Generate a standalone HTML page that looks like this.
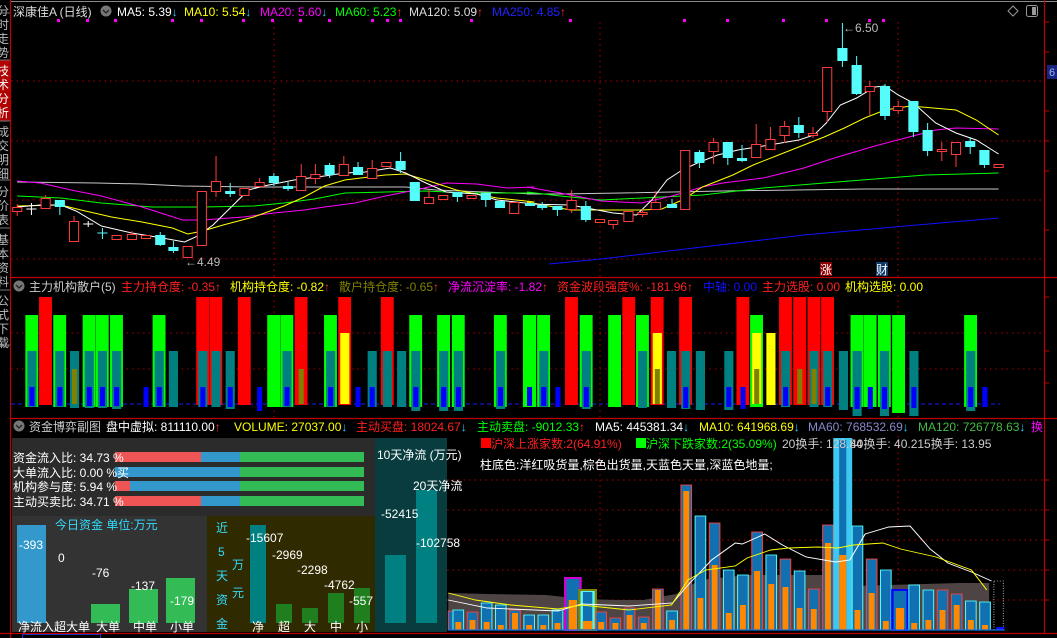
<!DOCTYPE html>
<html><head><meta charset="utf-8"><style>
html,body{margin:0;padding:0;background:#000;width:1057px;height:638px;overflow:hidden}
svg{display:block;font-family:"Liberation Sans","Noto Sans CJK SC",sans-serif}
.r{fill:#000;stroke:#ff3c3c;stroke-width:1}
.c{fill:#54fcfc}
.w{stroke:#ff3c3c;stroke-width:1}
.wc{stroke:#54fcfc;stroke-width:1}
.gd{stroke:#b00000;stroke-dasharray:1.5 4;stroke-width:1}
.G{fill:#00ff00}.R{fill:#ff0000}.T{fill:#008080}.B{fill:#0000ff}.Y{fill:#ffff00}.O{fill:#808000}
</style></head><body>
<svg width="1057" height="638" viewBox="0 0 1057 638" xmlns="http://www.w3.org/2000/svg">
<rect width="1057" height="638" fill="#000"/>
<!-- left tabs -->
<rect x="0" y="0" width="10" height="638" fill="#000"/>
<rect x="0" y="60" width="10" height="61" fill="#b00000"/>
<g fill="#bbbbbb" font-size="12">
<text x="-3" y="15">分</text><text x="-3" y="29">时</text><text x="-3" y="43">走</text><text x="-3" y="57">势</text>
<text x="-3" y="75" fill="#fff">技</text><text x="-3" y="89" fill="#fff">术</text><text x="-3" y="103" fill="#fff">分</text><text x="-3" y="117" fill="#fff">析</text>
<text x="-3" y="136">成</text><text x="-3" y="150">交</text><text x="-3" y="164">明</text><text x="-3" y="178">细</text>
<text x="-3" y="196">分</text><text x="-3" y="210">价</text><text x="-3" y="224">表</text>
<text x="-3" y="244">基</text><text x="-3" y="258">本</text><text x="-3" y="272">资</text><text x="-3" y="286">料</text>
<text x="-3" y="305">公</text><text x="-3" y="319">式</text><text x="-3" y="333">下</text><text x="-3" y="347">载</text>
</g>
<g stroke="#777" stroke-width="1"><line x1="0" y1="60" x2="10" y2="60"/><line x1="0" y1="121" x2="10" y2="121"/><line x1="0" y1="180" x2="10" y2="180"/><line x1="0" y1="228" x2="10" y2="228"/><line x1="0" y1="290" x2="10" y2="290"/><line x1="0" y1="13" x2="10" y2="13"/><line x1="0" y1="345" x2="10" y2="345"/></g>
<!-- frame -->
<line x1="10" y1="1.5" x2="1057" y2="1.5" stroke="#888" stroke-width="1"/>
<g stroke="#c00000" stroke-width="1.2">
<line x1="10.5" y1="0" x2="10.5" y2="638"/>
<line x1="1044.5" y1="0" x2="1044.5" y2="633"/>
<line x1="10" y1="277.5" x2="1057" y2="277.5"/>
<line x1="10" y1="418.5" x2="1057" y2="418.5"/>
<line x1="0" y1="633.5" x2="1057" y2="633.5"/>
</g>
<g stroke="#c00000" stroke-width="1"><line x1="1044" y1="22" x2="1049" y2="22"/><line x1="1044" y1="52" x2="1049" y2="52"/><line x1="1044" y1="111" x2="1049" y2="111"/><line x1="1044" y1="141" x2="1049" y2="141"/><line x1="1044" y1="171" x2="1049" y2="171"/><line x1="1044" y1="230" x2="1049" y2="230"/><line x1="1044" y1="297" x2="1049" y2="297"/><line x1="1044" y1="351" x2="1049" y2="351"/><line x1="1044" y1="383" x2="1049" y2="383"/><line x1="1044" y1="480" x2="1049" y2="480"/><line x1="1044" y1="510" x2="1049" y2="510"/><line x1="1044" y1="540" x2="1049" y2="540"/><line x1="1044" y1="570" x2="1049" y2="570"/><line x1="1044" y1="600" x2="1049" y2="600"/></g>
<rect x="1047" y="65" width="10" height="14" fill="#1a237e"/><text x="1049" y="76" font-size="11" fill="#9fb4ff">6</text>
<rect x="22.5" y="634.5" width="78" height="5" fill="#000" stroke="#2030c0"/>

<!-- grid main -->
<g class="gd">
<line x1="11" y1="81" x2="1044" y2="81"/><line x1="11" y1="141" x2="1044" y2="141"/><line x1="11" y1="200" x2="1044" y2="200"/><line x1="11" y1="259" x2="1044" y2="259"/>
<line x1="274" y1="22" x2="274" y2="277"/><line x1="600" y1="22" x2="600" y2="277"/><line x1="898" y1="22" x2="898" y2="277"/>
<line x1="11" y1="333" x2="1044" y2="333"/><line x1="11" y1="369" x2="1044" y2="369"/>
<line x1="274" y1="295" x2="274" y2="418"/><line x1="600" y1="295" x2="600" y2="418"/><line x1="898" y1="295" x2="898" y2="418"/>
<line x1="447" y1="480" x2="1044" y2="480"/><line x1="447" y1="510" x2="1044" y2="510"/><line x1="447" y1="540" x2="1044" y2="540"/><line x1="447" y1="570" x2="1044" y2="570"/><line x1="447" y1="600" x2="1044" y2="600"/>
<line x1="600" y1="436" x2="600" y2="632"/><line x1="898" y1="436" x2="898" y2="632"/>
</g>

<!-- title main -->
<g font-size="12">
<text x="13" y="16" fill="#ddd">深康佳A (日线)</text>
<circle cx="106" cy="11" r="5.5" fill="#777"/><path d="M103 10l3 3 3-3" stroke="#222" stroke-width="1.3" fill="none"/>
<text x="117" y="16" fill="#fff">MA5: 5.39<tspan fill="#3cf">↓</tspan></text>
<text x="184" y="16" fill="#ff0">MA10: 5.54<tspan fill="#3cf">↓</tspan></text>
<text x="260" y="16" fill="#f0f">MA20: 5.60<tspan fill="#3cf">↓</tspan></text>
<text x="335" y="16" fill="#0f0">MA60: 5.23<tspan fill="#f33">↑</tspan></text>
<text x="409" y="16" fill="#ddd">MA120: 5.09<tspan fill="#f33">↑</tspan></text>
<text x="492" y="16" fill="#22f">MA250: 4.85<tspan fill="#f33">↑</tspan></text>
</g>
<path d="M1013 6l5 5-5 5-5-5z" fill="none" stroke="#999"/>
<rect x="1026.5" y="5.5" width="11" height="11" rx="2" fill="none" stroke="#999"/><rect x="1032" y="7" width="4" height="8" fill="#999"/>
<g fill="#f0f"><rect x="57" y="19" width="3" height="3"/><rect x="86" y="19" width="3" height="3"/><rect x="114" y="19" width="3" height="3"/><rect x="171" y="19" width="3" height="3"/><rect x="200" y="19" width="3" height="3"/><rect x="242" y="19" width="3" height="3"/><rect x="271" y="19" width="3" height="3"/><rect x="299" y="19" width="3" height="3"/><rect x="328" y="19" width="3" height="3"/><rect x="371" y="19" width="3" height="3"/><rect x="386" y="19" width="3" height="3"/><rect x="399" y="19" width="3" height="3"/><rect x="470" y="19" width="3" height="3"/><rect x="569" y="19" width="3" height="3"/><rect x="683" y="19" width="3" height="3"/><rect x="726" y="19" width="3" height="3"/><rect x="782" y="19" width="3" height="3"/><rect x="825" y="19" width="3" height="3"/><rect x="868" y="19" width="3" height="3"/><rect x="882" y="19" width="3" height="3"/></g>

<!-- main candles left -->
<g transform="scale(1.0142,1)">
<polyline fill="none" stroke="#c8c8c8" points="17,182 95,183 140,184 180,186 250,187 400,187 430,190 527,194"/>
<polyline fill="none" stroke="#00ff00" points="17,196 60,198 100,203 150,207 200,207 250,206 280,203 310,199 340,193 380,192 420,191 460,193 527,193"/>
<polyline fill="none" stroke="#ff00ff" points="17,181 40,183 70,190 100,196 140,207 180,220 200,220 240,217 270,213 300,210 320,207 350,203 380,196 410,190 440,183 470,184 500,188 527,187"/>
<polyline fill="none" stroke="#ffff00" points="17,206 60,205 80,210 110,217 140,222 170,228 185,234 200,231 220,225 250,217 280,206 300,197 320,186 340,180 380,175 400,174 420,180 450,190 490,198 527,202"/>
<polyline fill="none" stroke="#fff" points="17,207 40,205 60,205 75,211 100,226 130,233 160,238 182,242 195,236 210,225 225,210 245,190 260,186 290,180 320,176 340,173 360,172 385,168 400,173 420,183 440,192 470,194 490,200 527,204"/>
<g class="w">
<line x1="17" y1="204" x2="17" y2="216"/><line x1="45" y1="195" x2="45" y2="208"/><line x1="73" y1="216" x2="73" y2="221"/><line x1="130" y1="231" x2="130" y2="234"/><line x1="213" y1="156" x2="213" y2="197"/><line x1="256" y1="178" x2="256" y2="182"/><line x1="297" y1="164" x2="297" y2="176"/><line x1="311" y1="164" x2="311" y2="184"/><line x1="339" y1="156" x2="339" y2="164"/><line x1="367" y1="160" x2="367" y2="168"/><line x1="423" y1="190" x2="423" y2="197"/>
</g>
<g class="wc">
<line x1="59" y1="200" x2="59" y2="215"/><line x1="101" y1="228" x2="101" y2="239"/><line x1="96" y1="233" x2="106" y2="233"/><line x1="158" y1="232" x2="158" y2="246"/><line x1="171" y1="241" x2="171" y2="253"/><line x1="227" y1="183" x2="227" y2="197"/><line x1="270" y1="173" x2="270" y2="186"/><line x1="284" y1="182" x2="284" y2="191"/><line x1="325" y1="163" x2="325" y2="178"/><line x1="353" y1="162" x2="353" y2="167"/><line x1="395" y1="152" x2="395" y2="173"/><line x1="451" y1="192" x2="451" y2="202"/><line x1="479" y1="193" x2="479" y2="207"/>
</g>
<g stroke="#fff"><line x1="26" y1="209" x2="36" y2="209"/><line x1="31" y1="203" x2="31" y2="215"/><line x1="82" y1="224" x2="92" y2="224"/><line x1="87" y1="221" x2="87" y2="227"/></g>
<rect class="r" x="12.5" y="207.5" width="9" height="4"/>
<rect class="r" x="40.5" y="198.5" width="9" height="10"/>
<rect class="c" x="54" y="200" width="10" height="7"/>
<rect class="r" x="68.5" y="221.5" width="9" height="20"/>
<rect class="r" x="110.5" y="235.5" width="9" height="4"/>
<rect class="r" x="125.5" y="234.5" width="9" height="5"/>
<rect class="r" x="139.5" y="235.5" width="9" height="3"/>
<rect class="c" x="153" y="235" width="10" height="10"/>
<rect class="c" x="166" y="247" width="10" height="4"/>
<rect class="r" x="180.5" y="246.5" width="9" height="11"/>
<rect class="r" x="194.5" y="191.5" width="9" height="54"/>
<rect class="r" x="208.5" y="181.5" width="9" height="10"/>
<rect class="c" x="222" y="191" width="10" height="3"/>
<rect class="r" x="236.5" y="188.5" width="9" height="7"/>
<rect class="r" x="251.5" y="182.5" width="9" height="4"/>
<rect class="c" x="265" y="176" width="10" height="7"/>
<rect class="c" x="279" y="186" width="10" height="3"/>
<rect class="r" x="292.5" y="176.5" width="9" height="14"/>
<rect class="r" x="306.5" y="174.5" width="9" height="4"/>
<rect class="c" x="320" y="165" width="10" height="10"/>
<rect class="r" x="334.5" y="164.5" width="9" height="11"/>
<rect class="c" x="348" y="167" width="10" height="8"/>
<rect class="r" x="362.5" y="168.5" width="9" height="10"/>
<rect class="r" x="376.5" y="162.5" width="9" height="4"/>
<rect class="c" x="390" y="161" width="10" height="9"/>
<rect class="c" x="404" y="182" width="10" height="19"/>
<rect class="r" x="418.5" y="197.5" width="9" height="6"/>
<rect class="r" x="432.5" y="195.5" width="9" height="4"/>
<rect class="c" x="446" y="192" width="10" height="5"/>
<rect class="r" x="460.5" y="195.5" width="9" height="3"/>
<rect class="c" x="474" y="193" width="10" height="7"/>
<rect class="c" x="488" y="201" width="10" height="7"/>
<rect class="r" x="502.5" y="202.5" width="9" height="11"/>
</g>
<text x="185" y="266" font-size="12" fill="#bbb">←4.49</text>

<!-- main right -->
<g transform="translate(527,0) scale(1.0142,1) translate(-527,0)">
<polyline fill="none" stroke="#1010ff" points="549,264 600,259 700,247 800,235 900,226 992,218"/>
<polyline fill="none" stroke="#c8c8c8" points="527,194 560,194 620,193 720,191 860,189 890,189 992,189"/>
<polyline fill="none" stroke="#00ff00" points="527,192 560,196 600,200 700,195 760,188 820,183 870,179 920,175 992,173"/>
<polyline fill="none" stroke="#ff00ff" points="527,187 560,193 600,201 640,203 670,196 700,187 720,183 760,178 800,168 830,158 870,146 900,138 930,130 950,128 992,129"/>
<polyline fill="none" stroke="#ffff00" points="527,202 570,210 600,210 640,210 660,209 680,200 700,187 730,175 750,165 775,155 800,145 820,137 840,128 860,118 880,110 905,106 950,110 970,120 992,135"/>
<polyline fill="none" stroke="#fff" points="527,204 570,205 612,213 635,215 650,200 665,180 680,170 695,163 715,155 735,150 760,146 795,140 810,135 822,123 836,105 852,98 870,87 880,86 893,95 908,103 930,123 950,133 970,140 992,154"/>
<g class="w">
<line x1="571" y1="190" x2="571" y2="213"/><line x1="612" y1="224" x2="612" y2="229"/><line x1="641" y1="209" x2="641" y2="217"/><line x1="654" y1="191" x2="654" y2="210"/><line x1="711" y1="138" x2="711" y2="164"/><line x1="753" y1="124" x2="753" y2="158"/><line x1="767" y1="127" x2="767" y2="139"/><line x1="781" y1="121" x2="781" y2="143"/><line x1="809" y1="127" x2="809" y2="138"/><line x1="823" y1="111" x2="823" y2="122"/><line x1="865" y1="81" x2="865" y2="115"/><line x1="893" y1="101" x2="893" y2="114"/><line x1="936" y1="142" x2="936" y2="161"/><line x1="950" y1="154" x2="950" y2="167"/>
</g>
<g class="wc">
<line x1="542" y1="202" x2="542" y2="210"/><line x1="557" y1="210" x2="557" y2="216"/><line x1="585" y1="201" x2="585" y2="222"/><line x1="670" y1="199" x2="670" y2="204"/><line x1="697" y1="150" x2="697" y2="168"/><line x1="725" y1="146" x2="725" y2="165"/><line x1="739" y1="145" x2="739" y2="162"/><line x1="795" y1="117" x2="795" y2="138"/><line x1="838" y1="23" x2="838" y2="67"/><line x1="852" y1="56" x2="852" y2="95"/><line x1="880" y1="84" x2="880" y2="120"/><line x1="908" y1="132" x2="908" y2="137"/><line x1="922" y1="123" x2="922" y2="156"/><line x1="964" y1="137" x2="964" y2="154"/><line x1="978" y1="165" x2="978" y2="168"/>
</g>
<rect class="c" x="525" y="203" width="10" height="3"/>
<rect class="c" x="537" y="205" width="10" height="3"/>
<rect class="c" x="552" y="206" width="10" height="4"/>
<rect class="r" x="566.5" y="200.5" width="9" height="9"/>
<rect class="c" x="580" y="206" width="10" height="14"/>
<rect class="r" x="594.5" y="219.5" width="9" height="3"/>
<rect class="r" x="607.5" y="220.5" width="9" height="4"/>
<rect class="r" x="622.5" y="211.5" width="9" height="10"/>
<rect class="r" x="636.5" y="212.5" width="9" height="2"/>
<rect class="r" x="649.5" y="202.5" width="9" height="7"/>
<rect class="c" x="665" y="204" width="10" height="4"/>
<rect class="r" x="678.5" y="150.5" width="9" height="59"/>
<rect class="c" x="692" y="152" width="10" height="11"/>
<rect class="r" x="706.5" y="142.5" width="9" height="9"/>
<rect class="c" x="720" y="142" width="10" height="16"/>
<rect class="c" x="734" y="158" width="10" height="3"/>
<rect class="r" x="748.5" y="144.5" width="9" height="13"/>
<rect class="r" x="762.5" y="139.5" width="9" height="10"/>
<rect class="r" x="776.5" y="126.5" width="9" height="9"/>
<rect class="c" x="790" y="125" width="10" height="8"/>
<rect class="r" x="804.5" y="133.5" width="9" height="2"/>
<rect class="r" x="818.5" y="67.5" width="9" height="44"/>
<rect class="c" x="833" y="48" width="10" height="13"/>
<rect class="c" x="847" y="65" width="10" height="29"/>
<rect class="r" x="860.5" y="86.5" width="9" height="5"/>
<rect class="c" x="875" y="86" width="10" height="30"/>
<rect class="r" x="888.5" y="106.5" width="9" height="4"/>
<rect class="c" x="903" y="101" width="10" height="31"/>
<rect class="c" x="917" y="130" width="10" height="21"/>
<rect class="r" x="931.5" y="149.5" width="9" height="2"/>
<rect class="r" x="945.5" y="142.5" width="9" height="12"/>
<rect class="c" x="959" y="141" width="10" height="6"/>
<rect class="c" x="973" y="150" width="10" height="15"/>
<rect class="r" x="987.5" y="164.5" width="9" height="3"/>
</g>
<text x="843" y="32" font-size="12" fill="#bbb">←6.50</text>
<rect x="820" y="262" width="12" height="14" fill="#8b0000"/><text x="820" y="274" font-size="12" fill="#fff">涨</text>
<rect x="876" y="262" width="12" height="14" fill="#0d3a6a"/><text x="876" y="274" font-size="12" fill="#fff">财</text>

<!-- panel2 title -->
<g font-size="12">
<circle cx="19" cy="286" r="5.5" fill="#777"/><path d="M16 285l3 3 3-3" stroke="#222" stroke-width="1.3" fill="none"/>
<text x="29" y="291" fill="#ccc">主力机构散户(5)</text>
<text x="121" y="291" fill="#ff2020">主力持仓度: -0.35<tspan fill="#f33">↑</tspan></text>
<text x="230" y="291" fill="#ff0">机构持仓度: -0.82<tspan fill="#f33">↑</tspan></text>
<text x="339" y="291" fill="#808000">散户持仓度: -0.65<tspan fill="#f33">↑</tspan></text>
<text x="448" y="291" fill="#f0f">净流沉淀率: -1.82<tspan fill="#f33">↑</tspan></text>
<text x="557" y="291" fill="#ff2020">资金波段强度%: -181.96<tspan fill="#f33">↑</tspan></text>
<text x="703" y="291" fill="#1010ff">中轴: 0.00</text>
<text x="762" y="291" fill="#ff2020">主力选股: 0.00</text>
<text x="845" y="291" fill="#ff0">机构选股: 0.00</text>
</g>
<line x1="11" y1="404" x2="1000" y2="404" stroke="#1a1aff" stroke-dasharray="4 3"/>
<g transform="scale(1.0142,1)">
<rect class="G" x="25" y="315" width="12.7" height="92"/><rect class="T" x="27" y="351" width="9" height="56"/><rect class="B" x="29" y="387" width="5" height="19"/>
<rect class="R" x="38.5" y="297" width="12.7" height="108"/>
<rect class="G" x="52.5" y="315" width="12.7" height="92"/><rect class="T" x="54.5" y="351" width="9" height="56"/><rect class="B" x="56.5" y="387" width="5" height="19"/>
<rect class="T" x="69" y="351" width="9" height="57"/><rect class="O" x="71" y="369" width="5" height="35"/>
<rect class="G" x="81.5" y="315" width="12.7" height="92"/><rect class="T" x="83.5" y="351" width="9" height="57"/><rect class="B" x="85.5" y="387" width="5" height="19"/>
<rect class="G" x="94.5" y="315" width="12.7" height="92"/><rect class="T" x="96.5" y="351" width="9" height="57"/><rect class="B" x="98.5" y="387" width="5" height="19"/>
<rect class="G" x="108.5" y="315" width="12.7" height="92"/><rect class="T" x="110.5" y="351" width="9" height="58"/><rect class="B" x="112.5" y="387" width="5" height="19"/>
<rect class="B" x="141.5" y="387" width="5" height="20"/>
<rect class="G" x="150.5" y="315" width="12.7" height="92"/><rect class="T" x="152.5" y="351" width="9" height="56"/><rect class="B" x="154.5" y="387" width="5" height="19"/>
<rect class="T" x="166.5" y="351" width="9" height="56"/>
<rect class="R" x="193.5" y="297" width="12.7" height="108"/><rect class="T" x="195.5" y="351" width="9" height="56"/><rect class="B" x="197.5" y="387" width="5" height="20"/>
<rect class="R" x="206.5" y="297" width="12.7" height="108"/><rect class="T" x="208.5" y="351" width="9" height="56"/>
<rect class="T" x="222.5" y="351" width="9" height="58"/><rect class="B" x="224.5" y="387" width="5" height="20"/>
<rect class="R" x="234.5" y="297" width="12.7" height="108"/>
<rect class="B" x="253.5" y="387" width="5" height="24"/>
<rect class="G" x="263.5" y="315" width="12.7" height="92"/>
<rect class="G" x="276.5" y="315" width="12.7" height="92"/><rect class="T" x="278.5" y="351" width="9" height="56"/><rect class="B" x="280.5" y="387" width="5" height="19"/>
<rect class="R" x="290.5" y="297" width="12.7" height="108"/><rect class="O" x="294.5" y="369" width="5" height="35"/>
<rect class="G" x="319.5" y="315" width="12.7" height="92"/><rect class="T" x="321.5" y="351" width="9" height="56"/><rect class="B" x="323.5" y="387" width="5" height="19"/>
<rect class="R" x="333.5" y="297" width="12.7" height="108"/><rect class="Y" x="335.5" y="333" width="9" height="71"/>
<rect class="B" x="350.5" y="387" width="5" height="20"/>
<rect class="T" x="362.5" y="351" width="9" height="56"/><rect class="B" x="364.5" y="387" width="5" height="20"/>
<rect class="R" x="375.5" y="297" width="12.7" height="108"/><rect class="T" x="377.5" y="351" width="9" height="56"/>
<rect class="T" x="391.5" y="351" width="9" height="56"/>
<rect class="G" x="403.5" y="315" width="12.7" height="92"/><rect class="T" x="405.5" y="351" width="9" height="60"/><rect class="B" x="407.5" y="387" width="5" height="20"/>
<rect class="G" x="431" y="315" width="12.7" height="92"/><rect class="T" x="433" y="351" width="9" height="60"/><rect class="B" x="435" y="387" width="5" height="20"/>
<rect class="G" x="445.5" y="315" width="12.7" height="92"/><rect class="T" x="447.5" y="351" width="9" height="60"/><rect class="B" x="449.5" y="387" width="5" height="20"/>
<rect class="G" x="487" y="315" width="12.7" height="92"/><rect class="T" x="489" y="351" width="9" height="58"/><rect class="B" x="491" y="387" width="5" height="19"/>
</g>
<g transform="translate(527,0) scale(1.0142,1) translate(-527,0)">
<rect class="G" x="523" y="315" width="13" height="92"/><rect class="B" x="527" y="387" width="5" height="19"/>
<rect class="G" x="537" y="315" width="12.7" height="92"/><rect class="T" x="539" y="351" width="9" height="56"/><rect class="B" x="541" y="387" width="5" height="19"/>
<rect class="B" x="555" y="387" width="5" height="20"/>
<rect class="R" x="564.5" y="297" width="12.7" height="108"/>
<rect class="G" x="579" y="315" width="12.7" height="92"/><rect class="T" x="581" y="351" width="9" height="58"/><rect class="B" x="583" y="387" width="5" height="20"/>
<rect class="G" x="607" y="315" width="12.7" height="92"/>
<rect class="R" x="621" y="297" width="12.7" height="108"/>
<rect class="G" x="634.5" y="315" width="12.7" height="92"/><rect class="T" x="636.5" y="351" width="9" height="57"/>
<rect class="R" x="649" y="297" width="12.7" height="108"/><rect class="Y" x="651" y="333" width="9" height="71"/><rect class="O" x="653" y="369" width="5" height="35"/>
<rect class="T" x="665" y="351" width="9" height="57"/>
<rect class="R" x="677" y="297" width="12.7" height="108"/><rect class="T" x="679" y="351" width="9" height="58"/><rect class="B" x="681" y="387" width="5" height="21"/>
<rect class="T" x="693.5" y="351" width="9" height="59"/>
<rect class="T" x="721.5" y="351" width="9" height="59"/><rect class="B" x="723.5" y="387" width="5" height="20"/>
<rect class="R" x="733.5" y="297" width="12.7" height="108"/><rect class="B" x="737.5" y="387" width="5" height="22"/>
<rect class="G" x="747" y="315" width="12.7" height="92"/><rect class="Y" x="749" y="333" width="9" height="71"/><rect class="O" x="751" y="369" width="5" height="35"/>
<rect class="Y" x="763" y="333" width="9" height="72"/>
<rect class="R" x="775.5" y="297" width="12.7" height="108"/><rect class="T" x="777.5" y="351" width="9" height="56"/><rect class="B" x="779.5" y="387" width="5" height="19"/>
<rect class="R" x="789.5" y="297" width="12.7" height="108"/><rect class="O" x="793.5" y="369" width="5" height="35"/>
<rect class="R" x="803.5" y="297" width="12.7" height="108"/><rect class="T" x="805.5" y="351" width="9" height="56"/><rect class="O" x="807.5" y="369" width="5" height="35"/>
<rect class="R" x="817" y="297" width="12.7" height="108"/><rect class="T" x="819" y="351" width="9" height="56"/><rect class="B" x="821" y="387" width="5" height="19"/>
<rect class="T" x="834.5" y="351" width="9" height="59"/>
<rect class="G" x="846" y="315" width="12.7" height="92"/><rect class="T" x="848" y="351" width="9" height="65"/><rect class="B" x="850" y="387" width="5" height="22"/>
<rect class="G" x="859" y="315" width="12.7" height="92"/><rect class="B" x="863" y="387" width="5" height="22"/>
<rect class="G" x="873" y="315" width="12.7" height="92"/><rect class="T" x="875" y="351" width="9" height="65"/><rect class="B" x="877" y="387" width="5" height="22"/>
<rect class="G" x="887" y="315" width="12.7" height="98"/>
<rect class="T" x="904" y="351" width="9" height="65"/><rect class="B" x="906" y="387" width="5" height="21"/>
<rect class="G" x="958" y="315" width="12.7" height="92"/><rect class="T" x="960" y="351" width="9" height="60"/><rect class="B" x="962" y="387" width="5" height="20"/>
<rect class="B" x="976" y="387" width="5" height="20"/>
</g>

<!-- panel3 title -->
<g font-size="12">
<circle cx="19" cy="426" r="5.5" fill="#777"/><path d="M16 425l3 3 3-3" stroke="#222" stroke-width="1.3" fill="none"/>
<text x="29" y="431" fill="#ccc">资金博弈副图</text>
<text x="106" y="431" fill="#fff">盘中虚拟: 811110.00<tspan fill="#f33">↑</tspan></text>
<text x="234" y="431" fill="#ff0">VOLUME: 27037.00<tspan fill="#3cf">↓</tspan></text>
<text x="356" y="431" fill="#ff2020">主动买盘: 18024.67<tspan fill="#3cf">↓</tspan></text>
<text x="477" y="431" fill="#0f0">主动卖盘: -9012.33<tspan fill="#f33">↑</tspan></text>
<text x="595" y="431" fill="#fff">MA5: 445381.34<tspan fill="#3cf">↓</tspan></text>
<text x="699" y="431" fill="#ff0">MA10: 641968.69<tspan fill="#3cf">↓</tspan></text>
<text x="808" y="431" fill="#8888cc">MA60: 768532.69<tspan fill="#3cf">↓</tspan></text>
<text x="918" y="431" fill="#44bb44">MA120: 726778.63<tspan fill="#3cf">↓</tspan></text>
<text x="1031" y="431" fill="#f0f">换</text>
</g>

<!-- volume area -->
<g transform="translate(440,0) scale(1.181,1) translate(-440,0)">
<polygon fill="#4e4444" points="447,593 480,594 530,595 560,599 590,600 612,600 640,594 660,580 700,575 780,575 790,586 850,584 880,583 905,583 905,630 447,630"/>
<g stroke-width="0.85">
<rect x="447" y="611" width="5" height="19" fill="#1070b0" stroke="#ff4040"/>
<rect x="451" y="610" width="9" height="20" fill="#1070b0" stroke="#54fcfc"/><rect x="453" y="622" width="5" height="8" fill="#ff8800"/>
<rect x="463" y="612" width="9" height="18" fill="#1070b0" stroke="#ff4040"/><rect x="465" y="620" width="5" height="10" fill="#ff8800"/>
<rect x="475" y="603" width="9" height="27" fill="#1070b0" stroke="#54fcfc"/><rect x="477" y="622" width="5" height="8" fill="#ff8800"/>
<rect x="487" y="605" width="9" height="25" fill="#1070b0" stroke="#54fcfc"/><rect x="489" y="625" width="5" height="5" fill="#ff8800"/>
<rect x="499" y="610" width="9" height="20" fill="#1070b0" stroke="#ff4040"/><rect x="501" y="613" width="5" height="17" fill="#ff8800"/>
<rect x="511" y="615" width="9" height="15" fill="#1070b0" stroke="#54fcfc"/><rect x="513" y="625" width="5" height="5" fill="#ff8800"/>
<rect x="523" y="615" width="9" height="15" fill="#1070b0" stroke="#54fcfc"/><rect x="525" y="625" width="5" height="5" fill="#ff8800"/>
<rect x="535" y="610" width="9" height="20" fill="#1070b0" stroke="#54fcfc"/><rect x="537" y="623" width="5" height="7" fill="#ff8800"/>
<rect x="546" y="578" width="13" height="52" fill="#1070b0" stroke="#d000d0" stroke-width="2"/><rect x="549" y="600" width="7" height="30" fill="#ff8800"/>
<rect x="558" y="590" width="14" height="40" fill="#54fcfc" stroke="#808000" stroke-width="2"/><rect x="561" y="592" width="8" height="38" fill="#1070b0"/><rect x="561" y="621" width="8" height="9" fill="#ff8800"/>
<rect x="572" y="612" width="9" height="18" fill="#1070b0" stroke="#ff4040"/><rect x="574" y="622" width="5" height="8" fill="#ff8800"/>
<rect x="584" y="618" width="9" height="12" fill="#1070b0" stroke="#ff4040"/><rect x="586" y="623" width="5" height="7" fill="#ff8800"/>
<rect x="596" y="608" width="9" height="22" fill="#1070b0" stroke="#ff4040"/><rect x="598" y="615" width="5" height="15" fill="#ff8800"/>
<rect x="608" y="617" width="9" height="13" fill="#1070b0" stroke="#ff4040"/><rect x="610" y="623" width="5" height="7" fill="#ff8800"/>
<rect x="620" y="589" width="9" height="41" fill="#1070b0" stroke="#ff4040"/><rect x="622" y="590" width="5" height="40" fill="#ff8800"/>
<rect x="632" y="611" width="9" height="19" fill="#1070b0" stroke="#54fcfc"/><rect x="634" y="620" width="5" height="10" fill="#ff8800"/>
<rect x="644" y="485" width="9" height="145" fill="#1070b0" stroke="#ff4040"/><rect x="646" y="491" width="5" height="139" fill="#ff8800"/>
<rect x="656" y="516" width="9" height="114" fill="#1070b0" stroke="#54fcfc"/><rect x="658" y="598" width="5" height="32" fill="#ff8800"/>
<rect x="668" y="523" width="9" height="107" fill="#1070b0" stroke="#ff4040"/><rect x="670" y="565" width="5" height="65" fill="#ff8800"/>
<rect x="680" y="570" width="9" height="60" fill="#1070b0" stroke="#54fcfc"/><rect x="682" y="613" width="5" height="17" fill="#ff8800"/>
<rect x="692" y="575" width="9" height="55" fill="#1070b0" stroke="#54fcfc"/><rect x="694" y="605" width="5" height="25" fill="#ff8800"/>
<rect x="704" y="532" width="9" height="98" fill="#1070b0" stroke="#ff4040"/><rect x="706" y="571" width="5" height="59" fill="#ff8800"/>
<rect x="716" y="555" width="9" height="75" fill="#1070b0" stroke="#54fcfc"/><rect x="718" y="584" width="5" height="46" fill="#ff8800"/>
<rect x="728" y="559" width="9" height="71" fill="#1070b0" stroke="#ff4040"/><rect x="730" y="587" width="5" height="43" fill="#ff8800"/>
<rect x="740" y="571" width="9" height="59" fill="#1070b0" stroke="#54fcfc"/><rect x="742" y="608" width="5" height="22" fill="#ff8800"/>
<rect x="752" y="589" width="9" height="41" fill="#1070b0" stroke="#ff4040"/><rect x="754" y="609" width="5" height="21" fill="#ff8800"/>
<rect x="764" y="525" width="9" height="105" fill="#1070b0" stroke="#ff4040"/><rect x="766" y="543" width="5" height="87" fill="#ff8800"/>
<rect x="773" y="438" width="16" height="192" fill="#3cc8f0"/><rect x="778" y="440" width="6" height="190" fill="#1070b0"/><rect x="778" y="555" width="6" height="75" fill="#ff8800"/>
<rect x="789" y="526" width="9" height="104" fill="#1070b0" stroke="#54fcfc"/><rect x="791" y="610" width="5" height="20" fill="#ff8800"/>
<rect x="801" y="559" width="9" height="71" fill="#1070b0" stroke="#ff4040"/><rect x="803" y="593" width="5" height="37" fill="#ff8800"/>
<rect x="813" y="570" width="9" height="60" fill="#1070b0" stroke="#54fcfc"/><rect x="815" y="621" width="5" height="9" fill="#ff8800"/>
<rect x="823" y="590" width="13" height="40" fill="#1070b0" stroke="#0000ff" stroke-width="2"/><rect x="826" y="608" width="7" height="22" fill="#ff8800"/>
<rect x="837" y="585" width="9" height="45" fill="#1070b0" stroke="#54fcfc"/><rect x="839" y="623" width="5" height="7" fill="#ff8800"/>
<rect x="849" y="590" width="9" height="40" fill="#1070b0" stroke="#54fcfc"/><rect x="851" y="620" width="5" height="10" fill="#ff8800"/>
<rect x="861" y="590" width="9" height="40" fill="#1070b0" stroke="#ff4040"/><rect x="863" y="610" width="5" height="20" fill="#ff8800"/>
<rect x="873" y="594" width="9" height="36" fill="#1070b0" stroke="#ff4040"/><rect x="875" y="605" width="5" height="25" fill="#ff8800"/>
<rect x="885" y="601" width="9" height="29" fill="#1070b0" stroke="#54fcfc"/><rect x="887" y="620" width="5" height="10" fill="#ff8800"/>
<rect x="897" y="602" width="9" height="28" fill="#1070b0" stroke="#54fcfc"/><rect x="899" y="625" width="5" height="5" fill="#ff8800"/>
<rect x="909" y="581" width="8" height="49" fill="none" stroke="#aaa" stroke-dasharray="1 1.5"/>
<rect x="911" y="627" width="7" height="3" fill="#1010ff"/>
</g>
<polyline fill="none" stroke="#fff" stroke-width="0.9" points="447,600 480,608 520,610 540,611 560,604 600,606 637,603 650,585 670,560 690,543 696,544 715,534 730,545 750,557 775,562 787,560 800,534 820,527 838,526 855,549 870,563 890,572 907,581"/>
<polyline fill="none" stroke="#ffff00" stroke-width="0.9" points="447,593 470,600 500,605 540,609 560,605 600,610 636,605 650,580 665,570 690,566 700,558 720,550 735,548 760,547 777,548 790,545 815,543 830,549 860,557 890,570 903,590"/>
<line x1="447" y1="630" x2="918" y2="630" stroke="#1070e0" stroke-width="1.2"/>
</g>
<g font-size="12">
<rect x="481" y="438" width="10" height="10" fill="#ff0000"/><text x="491" y="448" fill="#ff2020">沪深上涨家数:2(64.91%)</text>
<rect x="636" y="438" width="10" height="10" fill="#00ff00"/><text x="646" y="448" fill="#00ff00">沪深下跌家数:2(35.09%)</text>
<text x="782" y="448" fill="#ccc">20换手: 128.84</text><text x="850" y="448" fill="#ccc">40换手: 40.215换手: 13.95</text>
<text x="480" y="469" fill="#fff">柱底色:洋红吸货量,棕色出货量,天蓝色天量,深蓝色地量;</text>
</g>

<!-- dashboard -->
<rect x="12" y="438" width="363" height="78" fill="#2b2b2b"/>
<rect x="12" y="516" width="195" height="116" fill="#333"/>
<rect x="207" y="516" width="168" height="116" fill="#2f2a00"/>
<rect x="375" y="438" width="72" height="194" fill="#083c3e"/>
<g>
<rect x="115" y="452" width="86" height="10" fill="#f05555"/><rect x="201" y="452" width="39" height="10" fill="#3399cc"/><rect x="240" y="452" width="124" height="10" fill="#33bb55"/>
<rect x="115" y="467" width="125" height="10" fill="#3399cc"/><rect x="240" y="467" width="124" height="10" fill="#33bb55"/>
<rect x="115" y="481" width="15" height="10" fill="#f05555"/><rect x="130" y="481" width="110" height="10" fill="#3399cc"/><rect x="240" y="481" width="124" height="10" fill="#33bb55"/>
<rect x="115" y="496" width="86" height="10" fill="#f05555"/><rect x="201" y="496" width="39" height="10" fill="#3399cc"/><rect x="240" y="496" width="124" height="10" fill="#33bb55"/>
</g>
<g font-size="12" fill="#fff">
<text x="13" y="462">资金流入比: 34.73 %</text>
<text x="13" y="477">大单流入比: 0.00 %买</text>
<text x="13" y="491">机构参与度: 5.94 %</text>
<text x="13" y="506">主动买卖比: 34.71 %</text>
</g>
<text x="55" y="529" font-size="12" fill="#33ddff">今日资金 单位:万元</text>
<rect x="17" y="525" width="29" height="98" fill="#3399cc"/>
<rect x="91" y="604" width="29" height="19" fill="#33bb55"/>
<rect x="129" y="589" width="29" height="34" fill="#33bb55"/>
<rect x="166" y="578" width="29" height="45" fill="#33bb55"/>
<g font-size="12" fill="#fff">
<text x="19" y="549">-393</text><text x="58" y="562">0</text><text x="92" y="577">-76</text><text x="131" y="590">-137</text><text x="170" y="605">-179</text>
<text x="18" y="631">净流入超大单</text><text x="96" y="631">大单</text><text x="133" y="631">中单</text><text x="170" y="631">小单</text>
</g>
<g font-size="12" fill="#33ddff">
<text x="216" y="532">近</text><text x="218" y="556">5</text><text x="216" y="580">天</text><text x="216" y="604">资</text><text x="216" y="628">金</text>
<text x="232" y="569">万</text><text x="232" y="597">元</text>
</g>
<rect x="250" y="525" width="16" height="98" fill="#008080"/>
<rect x="276" y="604" width="16" height="19" fill="#1f7f1f"/>
<rect x="302" y="608" width="16" height="15" fill="#1f7f1f"/>
<rect x="328" y="593" width="16" height="30" fill="#1f7f1f"/>
<rect x="354" y="588" width="16" height="35" fill="#1f7f1f"/>
<g font-size="12" fill="#fff">
<text x="246" y="542">-15607</text><text x="272" y="559">-2969</text><text x="297" y="574">-2298</text><text x="324" y="589">-4762</text><text x="349" y="605">-557</text>
<text x="252" y="631">净</text><text x="278" y="631">超</text><text x="304" y="631">大</text><text x="330" y="631">中</text><text x="356" y="631">小</text>
</g>
<rect x="385" y="555" width="21" height="68" fill="#008080"/>
<rect x="416" y="490" width="21" height="133" fill="#008080"/>
<g font-size="12" fill="#fff">
<text x="377" y="459">10天净流 (万元)</text>
<text x="413" y="490">20天净流</text>
<text x="381" y="518">-52415</text>
<text x="416" y="547">-102758</text>
</g>
</svg>
</body></html>
